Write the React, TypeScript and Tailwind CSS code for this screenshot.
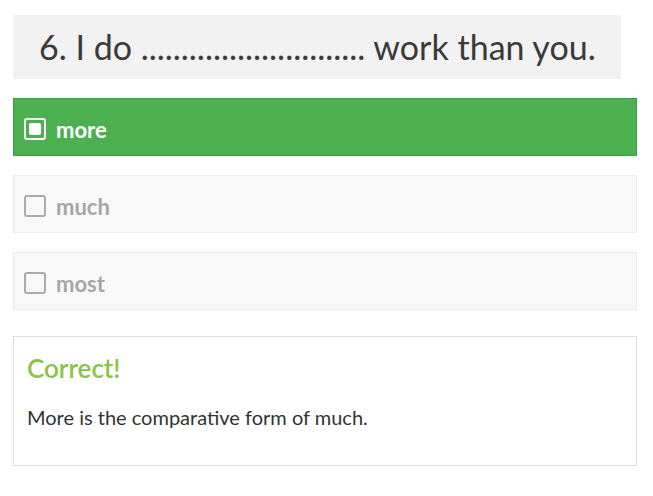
import React from 'react';

const options = [
  { label: 'more', selected: true },
  { label: 'much', selected: false },
  { label: 'most', selected: false },
];

function Box({ selected }: { selected: boolean }) {
  if (selected) {
    return (
      <span className="w-[22px] h-[22px] border-2 border-white rounded-[3px] flex items-center justify-center shrink-0">
        <span className="w-[12px] h-[12px] bg-white rounded-[2px]" />
      </span>
    );
  }
  return <span className="w-[22px] h-[22px] border-2 border-[#aaaaaa] rounded-[3px] shrink-0" />;
}

export default function App() {
  return (
    <div
      className="bg-white w-[653px] h-[496px] pl-[13px] pr-[16px] pt-[15px]"
      style={{ fontFamily: 'Lato, "Open Sans", sans-serif' }}
    >
      <div className="inline-block bg-[#f2f2f2] pl-[26px] pr-[25px] h-[64px] leading-[64px] text-[34px] text-[#3a3a3a]">
        6. I do ............................ work than you.
      </div>

      <div className="mt-[19px] flex flex-col gap-[19px]">
        {options.map((o) => (
          <div
            key={o.label}
            className={
              o.selected
                ? 'h-[58px] flex items-center gap-[10px] pl-[10px] pt-[4px] bg-[#4caf50] border border-[#3f9c43] text-white'
                : 'h-[58px] flex items-center gap-[10px] pl-[10px] pt-[4px] bg-[#f8f8f8] border border-[#ececec] text-[#a6a6a6]'
            }
          >
            <Box selected={o.selected} />
            <span className="text-[22px] font-bold">{o.label}</span>
          </div>
        ))}
      </div>

      <div className="mt-[26px] h-[130px] border border-[#dddddd] px-[13px] pt-[16px]">
        <h3 className="text-[26px] font-semibold text-[#8bc34a] leading-[30px]">Correct!</h3>
        <p className="mt-[20px] text-[20px] leading-[28px] text-[#333333]">More is the comparative form of much.</p>
      </div>
    </div>
  );
}
